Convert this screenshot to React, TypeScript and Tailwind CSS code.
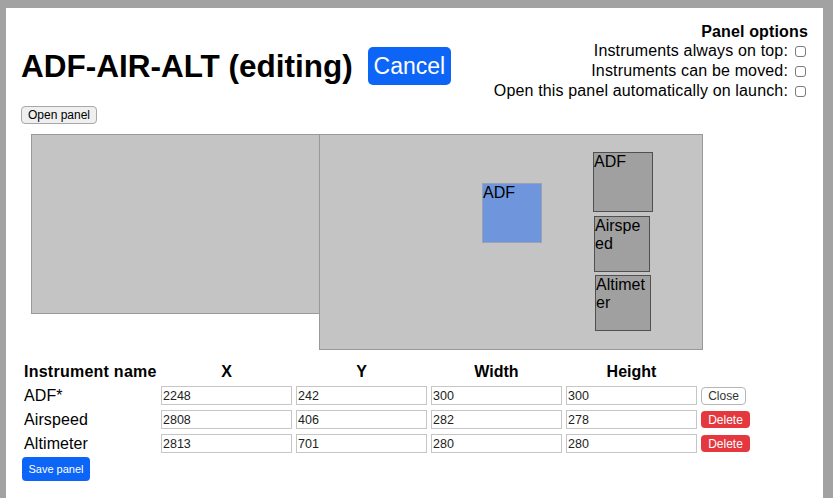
const options = [
  "Instruments always on top:",
  "Instruments can be moved:",
  "Open this panel automatically on launch:",
];

const rows = [
  { name: "ADF*", x: "2248", y: "242", w: "300", h: "300", action: "close" },
  { name: "Airspeed", x: "2808", y: "406", w: "282", h: "278", action: "delete" },
  { name: "Altimeter", x: "2813", y: "701", w: "280", h: "280", action: "delete" },
];

export default function App() {
  return (
    <div className="h-[498px] w-[833px] overflow-hidden bg-[#a2a2a2] pl-[6px] pr-[10px] pt-[8px] font-['Liberation_Sans',Arial,sans-serif] text-black">
      <div className="h-full bg-white px-[15px] pt-[15px]">
        {/* Header */}
        <div className="flex items-start justify-between">
          <div className="mt-[24px] flex h-[38px] items-center">
            <h1 className="text-[31.5px] font-bold leading-[36px]">ADF-AIR-ALT (editing)</h1>
            <button className="ml-[15px] h-[38px] w-[83px] rounded-[5px] bg-[#0c65f7] text-[23px] leading-none text-white">
              Cancel
            </button>
          </div>
          <div className="flex flex-col items-end text-[16px] tracking-[0.15px]">
            <div className="font-bold leading-[18px]">Panel options</div>
            {options.map((o) => (
              <label key={o} className="flex h-[20px] items-center">
                {o}
                <input
                  type="checkbox"
                  className="ml-[7px] mr-[2px] h-[11px] w-[11px] appearance-none rounded-[3px] border border-[#7a7a7a] bg-white"
                />
              </label>
            ))}
          </div>
        </div>

        <button className="mt-[5px] block h-[18px] w-[76px] rounded-[4px] border border-[#a8a8a8] bg-[#efefef] text-[12px] leading-none">
          Open panel
        </button>

        {/* Screen layout canvas */}
        <div className="relative ml-[10px] mt-[10px] h-[216px] w-[672px]">
          <div className="absolute left-0 top-0 h-[180px] w-[289px] border border-[#999] bg-[#c4c4c4]" />
          <div className="absolute left-[288px] top-0 h-[216px] w-[384px] border border-[#999] bg-[#c4c4c4]" />
          <div className="absolute left-[451px] top-[49px] h-[60px] w-[60px] break-all border border-[#98a3b6] bg-[#6f96dc] text-[16px] leading-[18px]">
            ADF
          </div>
          <div className="absolute left-[562px] top-[18px] h-[60px] w-[60px] break-all border border-[#505050] bg-[#a0a0a0] text-[16px] leading-[18px]">
            ADF
          </div>
          <div className="absolute left-[563px] top-[82px] h-[56px] w-[56px] break-all border border-[#505050] bg-[#a0a0a0] text-[16px] leading-[18px]">
            Airspeed
          </div>
          <div className="absolute left-[564px] top-[141px] h-[56px] w-[56px] break-all border border-[#505050] bg-[#a0a0a0] text-[16px] leading-[18px]">
            Altimeter
          </div>
        </div>

        {/* Instruments table */}
        <div className="ml-[3px] mt-[12px] grid grid-cols-[133px_131px_131px_131px_131px_auto] gap-x-[4px] gap-y-[4px] text-[16px]">
          <div className="flex h-[20px] items-center font-bold tracking-[0.25px]">Instrument name</div>
          <div className="flex h-[20px] items-center justify-center font-bold">X</div>
          <div className="flex h-[20px] items-center justify-center font-bold">Y</div>
          <div className="flex h-[20px] items-center justify-center font-bold">Width</div>
          <div className="flex h-[20px] items-center justify-center font-bold">Height</div>
          <div />
          {rows.map((r) => (
            <>
              <div key={r.name} className="flex h-[20px] items-center tracking-[0.1px]">{r.name}</div>
              {[r.x, r.y, r.w, r.h].map((v, i) => (
                <input
                  key={r.name + i}
                  value={v}
                  readOnly
                  className="h-[19px] w-full self-start border border-[#c6c6c6] px-[1px] text-[12.5px] text-[#222] outline-none"
                />
              ))}
              <div className="flex h-[19px] items-center">
                {r.action === "close" ? (
                  <button className="h-[18px] w-[45px] rounded-[4px] border border-[#b5b5b5] bg-white text-[12px] leading-none text-[#333]">
                    Close
                  </button>
                ) : (
                  <button className="h-[17px] w-[49px] rounded-[4px] bg-[#e5383e] text-[12px] leading-none text-white">
                    Delete
                  </button>
                )}
              </div>
            </>
          ))}
        </div>

        <button className="ml-[1px] mt-[3px] h-[24px] w-[68px] rounded-[4px] bg-[#0c65f7] text-[11px] leading-none text-white">
          Save panel
        </button>
      </div>
    </div>
  );
}
